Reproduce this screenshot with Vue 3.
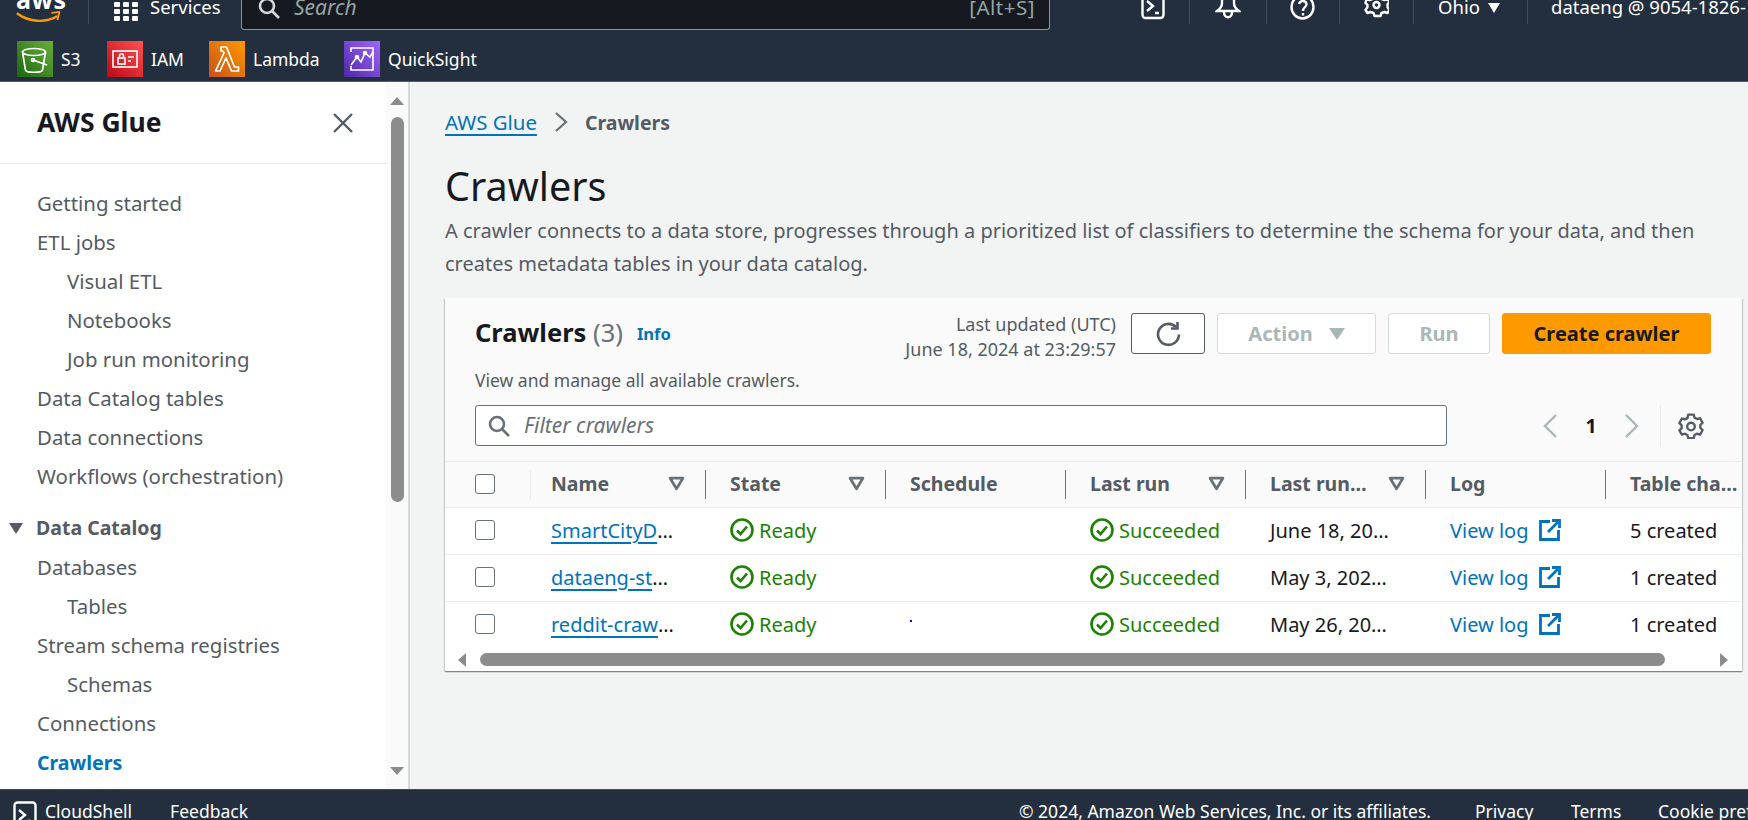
<template>
  <div class="console">
    <header class="topbar">
      <div class="toprow">
        <div class="logo">
          <span class="logo-text">aws</span>
          <svg class="smile" viewBox="0 0 48 14" fill="none">
            <path d="M1 3c12 9 30 10 42 3" stroke="#f90" stroke-width="2.6" stroke-linecap="round" />
            <path d="M38 2l8-1-2 8" stroke="#f90" stroke-width="2" stroke-linecap="round" stroke-linejoin="round" />
          </svg>
        </div>
        <i class="top-sep sep-logo"></i>
        <svg class="grid-icon" viewBox="0 0 24 19" fill="#fff">
          <rect x="0" y="0" width="6" height="5" rx="1" /><rect x="9" y="0" width="6" height="5" rx="1" /><rect x="18" y="0" width="6" height="5" rx="1" />
          <rect x="0" y="7" width="6" height="5" rx="1" /><rect x="9" y="7" width="6" height="5" rx="1" /><rect x="18" y="7" width="6" height="5" rx="1" />
          <rect x="0" y="14" width="6" height="5" rx="1" /><rect x="9" y="14" width="6" height="5" rx="1" /><rect x="18" y="14" width="6" height="5" rx="1" />
        </svg>
        <span class="services">Services</span>
        <div class="search">
          <svg class="search-icon" viewBox="0 0 22 22" fill="none" stroke="#d5dbdb" stroke-width="2.6">
            <circle cx="9" cy="9" r="7" /><path d="M14 14l7 7" />
          </svg>
          <span class="search-text">Search</span>
          <span class="search-key">[Alt+S]</span>
        </div>
        <svg class="tool tool-shell" viewBox="0 0 24 20" fill="none" stroke="#fff" stroke-width="2.4">
          <rect x="1.5" y="-10" width="21" height="28" rx="3" />
          <path d="M6 1l6 5-6 5M14 13h4" />
        </svg>
        <i class="top-sep"></i>
        <svg class="tool tool-bell" viewBox="0 0 26 20" fill="none" stroke="#fff" stroke-width="2.4">
          <path d="M7-4v7c0 4-2 6-5 8h22c-3-2-5-4-5-8v-7" /><path d="M9 12c0 7 8 7 8 0" />
        </svg>
        <i class="top-sep"></i>
        <svg class="tool tool-help" viewBox="0 0 24 20" fill="none" stroke="#fff" stroke-width="2.4">
          <ellipse cx="12" cy="7" rx="11" ry="11.500" />
          <path d="M8.500 4c1-4 7-4 7.500 0 .3 3-3.500 3-3.500 7" /><path d="M12.500 13v2.500" />
        </svg>
        <i class="top-sep"></i>
        <svg class="tool tool-gear" viewBox="0 0 24 20" fill="none" stroke="#fff" stroke-width="2.4" stroke-linejoin="round">
          <path d="M9-4l-1 3-3 1-3-1-1 4 2 2v2l-2 3 2 3 3-1 3 1 1 3h6l1-3 3-1 3 1 2-3-2-3V4l2-2-2-3-3 1-3-1-1-3z" />
          <circle cx="12" cy="5" r="3" />
        </svg>
        <i class="top-sep"></i>
        <span class="region">Ohio</span>
        <span class="region-caret"></span>
        <i class="top-sep"></i>
        <span class="account">dataeng @ 9054-1826-1234</span>
      </div>
      <div class="shortcuts">
        <div class="shortcut s3">
          <span class="tile tile-s3">
            <svg viewBox="0 0 36 36" fill="none" stroke="#fff" stroke-width="1.7" stroke-linejoin="round">
              <ellipse cx="17" cy="11" rx="11.500" ry="3.500" />
              <path d="M5.500 11l3 18c.5 3 16.500 3 17 0l3-18" />
              <path d="M16 19l14 5" /><circle cx="16" cy="19" r="1.500" />
            </svg>
          </span>
          <span>S3</span>
        </div>
        <div class="shortcut iam">
          <span class="tile tile-iam">
            <svg viewBox="0 0 36 36" fill="none" stroke="#fff" stroke-width="1.600">
              <rect x="6" y="10" width="24" height="16" />
              <rect x="11" y="17" width="7" height="6" /><path d="M12.500 17v-2c0-3 4-3 4 0v2" />
              <path d="M21 16h6M21 20h3" />
            </svg>
          </span>
          <span>IAM</span>
        </div>
        <div class="shortcut lambda">
          <span class="tile tile-lambda">
            <svg viewBox="0 0 36 36" fill="none" stroke="#fff" stroke-width="1.700" stroke-linejoin="round">
              <path d="M12 6h5.500l8 20h4v4h-7l-5.500-13-6 13H6.500l8.500-18-1-2h-2z" />
            </svg>
          </span>
          <span>Lambda</span>
        </div>
        <div class="shortcut quick">
          <span class="tile tile-quick">
            <svg viewBox="0 0 36 36" fill="none" stroke="#fff" stroke-width="1.600">
              <path d="M7 11V7h22v22H7v-4" />
              <path d="M7 24l6-8 4 5 4-9 5 4 3-5" />
              <circle cx="13" cy="16" r="1.500" fill="#fff" /><circle cx="21" cy="12" r="1.500" fill="#fff" />
            </svg>
          </span>
          <span>QuickSight</span>
        </div>
      </div>
    </header>

    <div class="middle">
      <aside class="sidebar">
        <div class="side-content">
          <div class="side-head">
            <h2>AWS Glue</h2>
            <svg class="close" viewBox="0 0 20 20" fill="none" stroke="#545b64" stroke-width="2.400">
              <path d="M1 1l18 18M19 1L1 19" />
            </svg>
          </div>
          <nav class="side-nav">
            <template v-for="item in navItems" :key="item.label">
              <div v-if="item.section" class="nav-section">
                <span class="section-caret"></span>{{ item.label }}
              </div>
              <a v-else class="nav-item" :class="{ sub: item.sub, active: item.active }">{{ item.label }}</a>
            </template>
          </nav>
        </div>
        <div class="side-scroll">
          <span class="arrow-up"></span>
          <span class="side-thumb"></span>
          <span class="arrow-down"></span>
        </div>
      </aside>

      <main class="content">
        <div class="breadcrumb">
          <a class="link">AWS Glue</a>
          <svg class="crumb-sep" viewBox="0 0 16 20" fill="none" stroke="#687078" stroke-width="2.200">
            <path d="M3 1l10 9-10 9" />
          </svg>
          <span class="crumb-current">Crawlers</span>
        </div>
        <h1>Crawlers</h1>
        <p class="intro">
          A crawler connects to a data store, progresses through a prioritized list of classifiers to determine the schema for your data, and then creates metadata tables in your data catalog.
        </p>

        <section class="panel">
          <div class="panel-head">
            <div class="title-row">
              <h3>Crawlers <span class="count">(3)</span></h3>
              <a class="info">Info</a>
              <div class="updated">Last updated (UTC)<br />June 18, 2024 at 23:29:57</div>
              <button class="btn btn-refresh">
                <svg viewBox="0 0 26 26" fill="none" stroke="#545b64" stroke-width="2.600">
                  <path d="M21 6a10.500 10.500 0 1 0 3 7.500" />
                  <path d="M22.500 1v6.500H16" />
                </svg>
              </button>
              <button class="btn btn-action" disabled>Action <span class="btn-caret"></span></button>
              <button class="btn btn-run" disabled>Run</button>
              <button class="btn btn-create">Create crawler</button>
            </div>
            <p class="panel-desc">View and manage all available crawlers.</p>
            <div class="filter-row">
              <div class="filter">
                <svg viewBox="0 0 22 22" fill="none" stroke="#687078" stroke-width="2.600">
                  <circle cx="9" cy="9" r="7" /><path d="M14 14l7 7" />
                </svg>
                <span>Filter crawlers</span>
              </div>
              <div class="pager">
                <svg class="chev" viewBox="0 0 16 26" fill="none" stroke="#aab7b8" stroke-width="2.400"><path d="M14 2L3 13l11 11" /></svg>
                <span class="page">1</span>
                <svg class="chev" viewBox="0 0 16 26" fill="none" stroke="#aab7b8" stroke-width="2.400"><path d="M2 2l11 11L2 24" /></svg>
                <i class="pager-sep"></i>
                <svg class="pager-gear" viewBox="0 0 24 24" fill="none" stroke="#545b64" stroke-width="2.200" stroke-linejoin="round">
                  <path d="M9.500 1.500h5l.8 2.900 2.200 1.200 2.900-.8 2.300 4.200-2.100 2.100v2.500l2.100 2.100-2.300 4.200-2.900-.8-2.200 1.200-.8 2.900h-5l-.8-2.900-2.200-1.200-2.900.8L1.300 16l2.100-2.100v-2.500L1.300 9.300l2.300-4.200 2.900.8 2.200-1.200z" />
                  <circle cx="12" cy="12.500" r="3.500" />
                </svg>
              </div>
            </div>
          </div>

          <div class="table">
            <div class="row row-head">
              <div class="cell check-cell head-check"><span class="checkbox"></span></div>
              <div v-for="col in columns" :key="col.label" class="cell head-cell">
                <span>{{ col.label }}</span>
                <svg v-if="col.sort" class="sort" viewBox="0 0 16 14" fill="none" stroke="#687078" stroke-width="2.600" stroke-linejoin="round">
                  <path d="M2 2h12L8 12z" />
                </svg>
              </div>
            </div>
            <div v-for="row in rows" :key="row.name" class="row">
              <div class="cell check-cell"><span class="checkbox"></span></div>
              <div class="cell"><a class="link">{{ row.name }}</a>…</div>
              <div class="cell status">
                <svg viewBox="0 0 24 24" fill="none" stroke="#1d8102" stroke-width="2.600">
                  <circle cx="12" cy="12" r="10.500" /><path d="M7 12.500l3.500 3.500L17 8.500" />
                </svg>
                Ready
              </div>
              <div class="cell"><i v-if="row.dot" class="stray-dot"></i></div>
              <div class="cell status">
                <svg viewBox="0 0 24 24" fill="none" stroke="#1d8102" stroke-width="2.600">
                  <circle cx="12" cy="12" r="10.500" /><path d="M7 12.500l3.500 3.500L17 8.500" />
                </svg>
                Succeeded
              </div>
              <div class="cell">{{ row.date }}</div>
              <div class="cell log">
                View log
                <svg viewBox="0 0 22 22" fill="none" stroke="#0073bb" stroke-width="2.800">
                  <path d="M11 2.500H1.500v18h18V11" /><path d="M13 1.500h7.500V9M20 2L9 13" />
                </svg>
              </div>
              <div class="cell">{{ row.tables }}</div>
            </div>
          </div>

          <div class="h-scroll">
            <span class="arrow-left"></span>
            <span class="h-thumb"></span>
            <span class="arrow-right"></span>
          </div>
        </section>
      </main>
    </div>

    <footer class="footer">
      <svg class="foot-shell" viewBox="0 0 24 24" fill="none" stroke="#fff" stroke-width="2.400">
        <rect x="1.500" y="1.500" width="21" height="28" rx="3" />
        <path d="M6 9l6 5-6 5M14 20h4" />
      </svg>
      <span class="foot-cloud">CloudShell</span>
      <span class="foot-feedback">Feedback</span>
      <span class="foot-copy">© 2024, Amazon Web Services, Inc. or its affiliates.</span>
      <span class="foot-privacy">Privacy</span>
      <span class="foot-terms">Terms</span>
      <span class="foot-cookie">Cookie preferences</span>
    </footer>
  </div>
</template>

<script setup>
const navItems = [
  { label: 'Getting started' },
  { label: 'ETL jobs' },
  { label: 'Visual ETL', sub: true },
  { label: 'Notebooks', sub: true },
  { label: 'Job run monitoring', sub: true },
  { label: 'Data Catalog tables' },
  { label: 'Data connections' },
  { label: 'Workflows (orchestration)' },
  { label: 'Data Catalog', section: true },
  { label: 'Databases' },
  { label: 'Tables', sub: true },
  { label: 'Stream schema registries' },
  { label: 'Schemas', sub: true },
  { label: 'Connections' },
  { label: 'Crawlers', active: true }
]

const columns = [
  { label: 'Name', sort: true },
  { label: 'State', sort: true },
  { label: 'Schedule' },
  { label: 'Last run', sort: true },
  { label: 'Last run…', sort: true },
  { label: 'Log' },
  { label: 'Table cha…' }
]

const rows = [
  { name: 'SmartCityD', date: 'June 18, 20…', tables: '5 created' },
  { name: 'dataeng-st', date: 'May 3, 202…', tables: '1 created' },
  { name: 'reddit-craw', date: 'May 26, 20…', tables: '1 created', dot: true }
]
</script>

<style>
html, body {
  margin: 0;
  overflow: hidden;
}
</style>

<style scoped>
.console {
  width: 1748px;
  height: 820px;
  display: flex;
  flex-direction: column;
  overflow: hidden;
  font-family: "Noto Sans", Roboto, sans-serif;
  font-size: 19.5px;
  color: #16191f;
  background: #f2f3f3;
}

/* top bar */
.topbar {
  height: 82px;
  box-sizing: border-box;
  flex: none;
  background: #232f3e;
  color: #fff;
  border-bottom: 1px solid #545b64;
}

.toprow {
  height: 33px;
  display: flex;
  align-items: flex-start;
  overflow: hidden;
}

.toprow > * {
  flex: none;
}

.logo {
  width: 48px;
  height: 24px;
  margin-left: 15px;
  position: relative;
}

.logo-text {
  position: absolute;
  left: 1px;
  top: -14px;
  font-size: 25px;
  line-height: 26px;
  font-weight: 700;
  letter-spacing: 0.5px;
}

.smile {
  position: absolute;
  left: 0;
  top: 11px;
  width: 48px;
  height: 13px;
}

.top-sep {
  width: 1px;
  height: 24px;
  background: #414d5c;
}

.sep-logo {
  margin-left: 25px;
}

.grid-icon {
  width: 24px;
  height: 19px;
  margin: 2px 0 0 25px;
}

.services {
  width: 91px;
  margin-left: 12px;
  font-size: 18.5px;
  line-height: 14px;
}

.search {
  width: 777px;
  height: 29px;
  background: #16191f;
  border: 1px solid #879596;
  border-top: 0;
  border-radius: 0 0 3px 3px;
  display: flex;
  align-items: flex-start;
  padding: 0 14px 0 16px;
}

.search-icon {
  width: 22px;
  height: 22px;
  margin-top: -3px;
}

.search-text {
  margin-left: 14px;
  font-style: italic;
  color: #95a5a6;
  line-height: 14px;
  font-size: 21px;
}

.search-key {
  margin-left: auto;
  color: #95a5a6;
  line-height: 14px;
  font-size: 20.500px;
  letter-spacing: 0.5px;
}

.tool {
  height: 20px;
}

.tool-shell {
  width: 24px;
  margin: 0 24px 0 91px;
}

.tool-bell {
  width: 26px;
  margin: 0 25px 0 25px;
}

.tool-help {
  width: 25px;
  margin: 0 24px 0 23px;
}

.tool-gear {
  width: 25px;
  margin: 0 24px 0 24px;
}

.region {
  width: 50px;
  margin-left: 24px;
  line-height: 14px;
  font-size: 18.5px;
}

.region-caret {
  width: 0;
  height: 0;
  margin: 3px 27px 0 0;
  border-left: 6.500px solid transparent;
  border-right: 6.500px solid transparent;
  border-top: 10px solid #fff;
}

.account {
  margin-left: 23px;
  white-space: nowrap;
  line-height: 14px;
  font-size: 18.5px;
}

.shortcuts {
  margin-top: 8px;
  height: 36px;
  display: flex;
  font-size: 17.500px;
  padding-left: 17px;
}

.shortcut {
  display: flex;
  align-items: center;
  gap: 8px;
  flex: none;
}

.s3 { width: 90px; }
.iam { width: 102px; }
.lambda { width: 135px; }

.tile {
  width: 36px;
  height: 36px;
  flex: none;
}

.tile svg {
  display: block;
  width: 36px;
  height: 36px;
}

.tile-s3 { background: linear-gradient(45deg, #1b660f, #6cae3e); }
.tile-iam { background: linear-gradient(45deg, #bd0816, #ff5252); }
.tile-lambda { background: linear-gradient(45deg, #c8511b, #f90); }
.tile-quick { background: linear-gradient(45deg, #4d27a8, #a166ff); }

/* sidebar */
.middle {
  flex: 1;
  min-height: 0;
  display: flex;
}

.sidebar {
  width: 410px;
  flex: none;
  box-sizing: border-box;
  background: #fff;
  border-right: 2px solid #d5dbdb;
  display: flex;
}

.side-content {
  flex: 1;
  min-width: 0;
}

.side-head {
  height: 82px;
  box-sizing: border-box;
  display: flex;
  align-items: center;
  justify-content: space-between;
  padding: 0 33px 0 37px;
  border-bottom: 1px solid #eaeded;
}

.side-head h2 {
  margin: 0 0 2px;
  font-size: 26.500px;
  font-weight: 700;
}

.close {
  width: 20px;
  height: 20px;
}

.side-nav {
  display: flex;
  flex-direction: column;
  padding-top: 20px;
}

.nav-item,
.nav-section {
  height: 39px;
  line-height: 39px;
  font-size: 20.400px;
  color: #545b64;
  padding-left: 37px;
  white-space: nowrap;
}

.nav-item.sub {
  padding-left: 67px;
}

.nav-item.active {
  color: #0073bb;
  font-size: 19.500px;
  font-weight: 700;
}

.nav-section {
  height: 40px;
  line-height: 40px;
  margin-top: 12px;
  padding-left: 9px;
  font-size: 19.500px;
  font-weight: 700;
  display: flex;
  align-items: center;
}

.section-caret {
  width: 0;
  height: 0;
  margin-right: 13px;
  border-left: 7px solid transparent;
  border-right: 7px solid transparent;
  border-top: 11px solid #545b64;
}

.side-scroll {
  width: 22px;
  flex: none;
  background: #fafafa;
  display: flex;
  flex-direction: column;
  align-items: center;
  padding-top: 15px;
}

.arrow-up {
  width: 0;
  height: 0;
  border-left: 7.500px solid transparent;
  border-right: 7.500px solid transparent;
  border-bottom: 8px solid #8c8c8c;
}

.side-thumb {
  width: 13px;
  height: 385px;
  margin-top: 12px;
  border-radius: 7px;
  background: #8c8c8c;
}

.arrow-down {
  width: 0;
  height: 0;
  margin-top: 265px;
  border-left: 7.500px solid transparent;
  border-right: 7.500px solid transparent;
  border-top: 8px solid #8c8c8c;
}

/* main */
.content {
  flex: 1;
  min-width: 0;
  padding: 26px 6px 0 35px;
}

.link {
  color: #0073bb;
  text-decoration: underline;
  text-decoration-thickness: 2px;
  text-underline-offset: 4px;
}

.breadcrumb {
  height: 28px;
  display: flex;
  align-items: center;
  font-size: 20.400px;
}

.crumb-sep {
  width: 16px;
  height: 20px;
  margin: 0 16px 0 16px;
}

.crumb-current {
  color: #545b64;
  font-size: 19.500px;
  font-weight: 700;
}

h1 {
  margin: 25px 0 0;
  font-size: 39.500px;
  line-height: 50px;
  font-weight: 400;
}

.intro {
  margin: 3px 0 0;
  font-size: 20px;
  line-height: 33px;
  color: #545b64;
}

.panel {
  margin-top: 18px;
  background: #fff;
  box-shadow: 0 1px 1px 0 rgba(0, 28, 36, 0.3), 1px 1px 1px 0 rgba(0, 28, 36, 0.15), -1px 1px 1px 0 rgba(0, 28, 36, 0.15);
}

.panel-head {
  background: #fafafa;
  padding: 15px 31px 15px 30px;
}

.title-row {
  height: 41px;
  display: flex;
  align-items: center;
}

h3 {
  margin: 0 0 2px;
  font-size: 25.500px;
  font-weight: 700;
  line-height: 39px;
}

.count {
  font-weight: 400;
  color: #687078;
}

.info {
  margin-left: 14px;
  color: #0073bb;
  font-size: 16.500px;
  font-weight: 700;
}

.updated {
  margin-left: auto;
  padding-top: 6px;
  text-align: right;
  font-size: 18px;
  line-height: 25px;
  color: #545b64;
}

.btn {
  height: 41px;
  box-sizing: border-box;
  border-radius: 3px;
  font-family: inherit;
  font-size: 20px;
  font-weight: 700;
  padding: 0;
  display: flex;
  align-items: center;
  justify-content: center;
  flex: none;
}

.btn-refresh {
  width: 74px;
  margin-left: 15px;
  background: #fff;
  border: 1px solid #545b64;
}

.btn-refresh svg {
  width: 26px;
  height: 26px;
}

.btn-action,
.btn-run {
  background: #fff;
  border: 1px solid #d5dbdb;
  color: #aab7b8;
}

.btn-action {
  width: 159px;
  margin-left: 12px;
}

.btn-caret {
  width: 0;
  height: 0;
  margin-left: 16px;
  border-left: 8px solid transparent;
  border-right: 8px solid transparent;
  border-top: 12px solid #aab7b8;
}

.btn-run {
  width: 102px;
  margin-left: 12px;
}

.btn-create {
  width: 209px;
  margin-left: 12px;
  background: #f90;
  border: 1px solid #f90;
  color: #16191f;
}

.panel-desc {
  margin: 12px 0 0;
  font-size: 17.500px;
  line-height: 28px;
  color: #545b64;
}

.filter-row {
  margin-top: 11px;
  display: flex;
  align-items: center;
}

.filter {
  width: 972px;
  height: 41px;
  box-sizing: border-box;
  background: #fff;
  border: 1px solid #687078;
  border-radius: 3px;
  display: flex;
  align-items: center;
  padding-left: 12px;
  font-size: 21px;
  font-style: italic;
  color: #687078;
}

.filter svg {
  width: 22px;
  height: 22px;
  margin-right: 14px;
}

.filter span {
  margin-bottom: 2px;
}

.pager {
  flex: 1;
  display: flex;
  align-items: center;
  padding-left: 95px;
}

.chev {
  width: 16px;
  height: 26px;
  flex: none;
}

.page {
  width: 66px;
  text-align: center;
  font-weight: 700;
}

.pager-sep {
  width: 1px;
  height: 41px;
  background: #eaeded;
  margin-left: 20px;
}

.pager-gear {
  width: 26px;
  height: 26px;
  margin-left: 17px;
}

/* table */
.table {
  overflow: hidden;
}

.row {
  display: grid;
  grid-template-columns: 86px 175px 180px 180px 180px 180px 180px 180px;
  height: 47px;
  border-top: 1px solid #eaeded;
  box-sizing: border-box;
  background: #fff;
  font-size: 20px;
}

.row-head {
  height: 46px;
  background: #fafafa;
  font-size: 19.500px;
  font-weight: 700;
  color: #545b64;
}

.cell {
  position: relative;
  display: flex;
  align-items: center;
  padding-left: 24px;
  padding-bottom: 2px;
  white-space: nowrap;
}

.cell:nth-child(2) {
  padding-left: 20px;
}

.check-cell {
  padding-left: 30px;
}

.head-cell {
  justify-content: space-between;
  padding-right: 21px;
}

.head-cell::after {
  content: '';
  position: absolute;
  right: 0;
  top: 8px;
  bottom: 8px;
  width: 1px;
  background: #687078;
}

.head-check::after {
  content: '';
  position: absolute;
  right: 0;
  top: 8px;
  bottom: 8px;
  width: 1px;
  background: #eaeded;
}

.sort {
  width: 17px;
  height: 15px;
  flex: none;
}

.checkbox {
  width: 20px;
  height: 20px;
  box-sizing: border-box;
  border: 1.500px solid #687078;
  border-radius: 3px;
  background: #fff;
}

.status {
  gap: 5px;
  color: #1d8102;
}

.status svg {
  width: 24px;
  height: 24px;
  flex: none;
}

.log {
  gap: 10px;
  color: #0073bb;
}

.log svg {
  width: 22px;
  height: 22px;
  flex: none;
}

.stray-dot {
  position: absolute;
  left: 24px;
  top: 18px;
  width: 2px;
  height: 2px;
  background: #00f;
}

.h-scroll {
  height: 23px;
  background: #fff;
  display: flex;
  align-items: center;
  padding-left: 13px;
  position: relative;
}

.arrow-left {
  width: 0;
  height: 0;
  border-top: 7.500px solid transparent;
  border-bottom: 7.500px solid transparent;
  border-right: 8px solid #8c8c8c;
}

.h-thumb {
  width: 1185px;
  height: 13px;
  margin-left: 14px;
  border-radius: 7px;
  background: #8c8c8c;
}

.arrow-right {
  width: 0;
  height: 0;
  margin-left: 55px;
  border-top: 7.500px solid transparent;
  border-bottom: 7.500px solid transparent;
  border-left: 8px solid #8c8c8c;
}

/* footer */
.footer {
  height: 31px;
  flex: none;
  background: #232f3e;
  border-top: 1px solid #414d5c;
  color: #fff;
  display: flex;
  align-items: flex-start;
  overflow: hidden;
  font-size: 17.500px;
  line-height: 43px;
  box-sizing: border-box;
  white-space: nowrap;
}

.foot-shell {
  width: 24px;
  height: 24px;
  margin: 11px 0 0 13px;
  flex: none;
}

.foot-cloud { margin-left: 8px; }
.foot-feedback { margin-left: 38px; }
.foot-copy { margin-left: auto; width: 456px; flex: none; }
.foot-privacy { width: 96px; flex: none; }
.foot-terms { width: 87px; flex: none; }
.foot-cookie { width: 90px; flex: none; }
</style>
